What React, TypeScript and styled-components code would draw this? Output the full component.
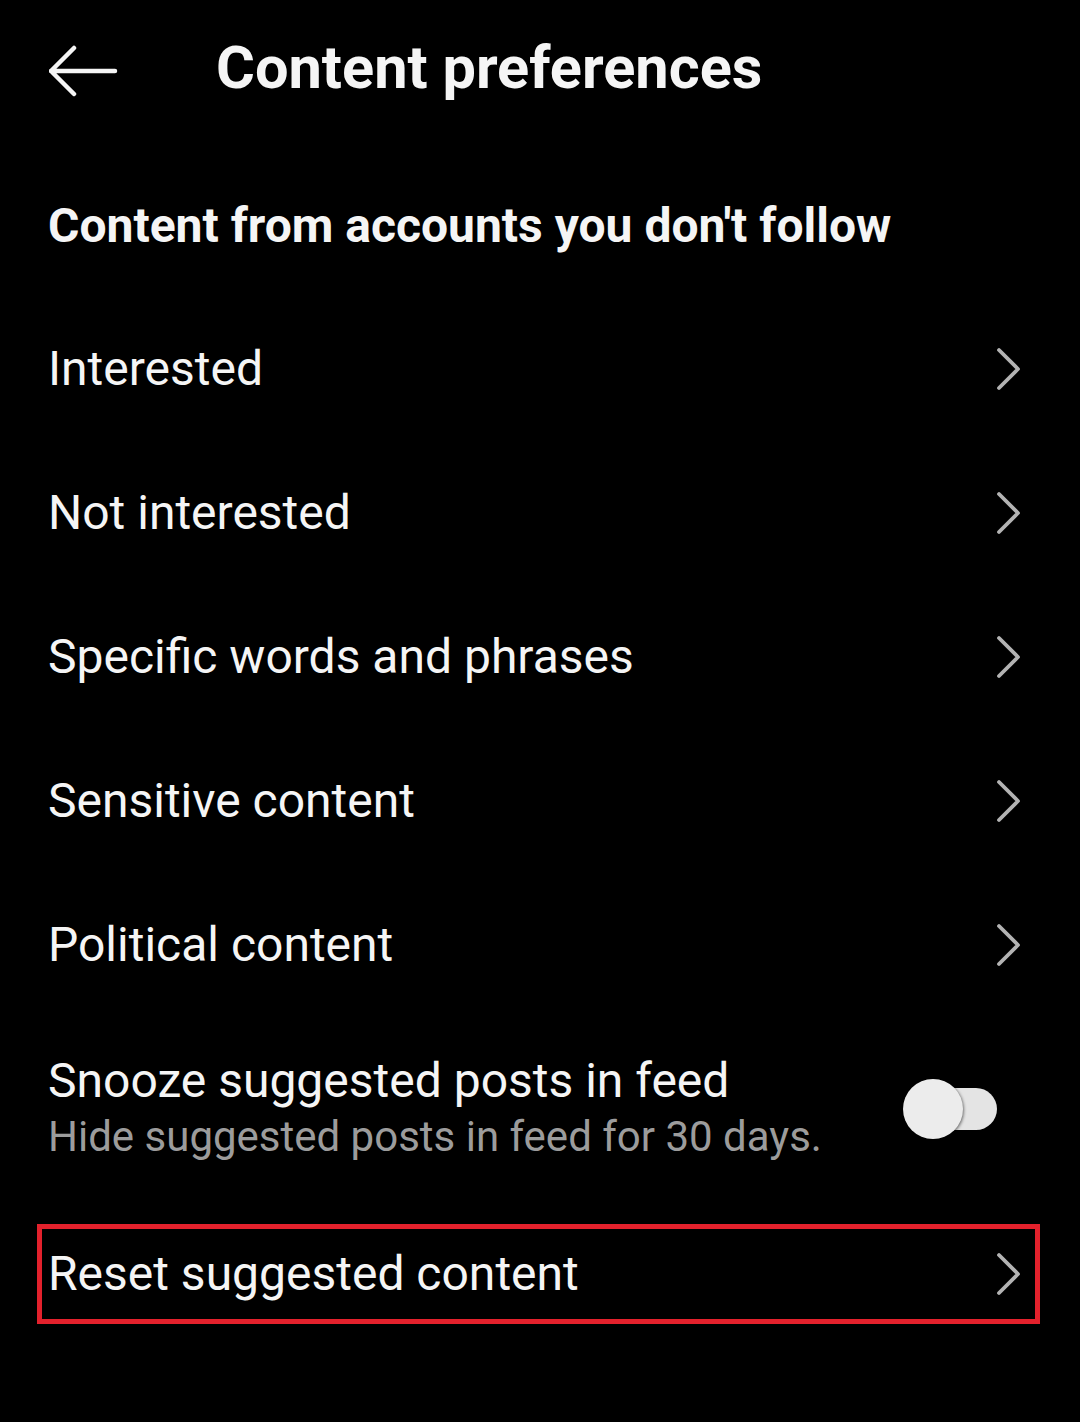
import * as React from 'react'
import styled, { createGlobalStyle } from 'styled-components'

const GlobalStyle = createGlobalStyle`
  html, body {
    margin: 0;
    padding: 0;
    background: #000;
  }
  body {
    font-family: Roboto, 'Noto Sans', 'Liberation Sans', sans-serif;
    color: #f5f5f5;
  }
`

const Page = styled.div`
  width: 1080px;
  min-height: 1422px;
  background: #000;
  display: flex;
  flex-direction: column;
`

const Header = styled.header`
  height: 142px;
  display: flex;
  align-items: center;
  padding-left: 49px;
  box-sizing: border-box;
`

const BackButton = styled.div`
  width: 167px;
  display: flex;
  align-items: center;
  svg {
    display: block;
  }
`

const Title = styled.h1`
  margin: 0 0 6px;
  font-size: 59.5px;
  font-weight: 700;
  color: #f5f5f5;
  line-height: 70px;
`

const SectionTitle = styled.h2`
  margin: 0;
  height: 155px;
  padding: 56px 0 0 48px;
  box-sizing: border-box;
  font-size: 48px;
  font-weight: 700;
  line-height: 56px;
  color: #f5f5f5;
`

const Row = styled.div<{ $height?: number }>`
  height: ${p => p.$height ?? 144}px;
  display: flex;
  align-items: center;
  justify-content: space-between;
  padding: 0 58px 0 48px;
  box-sizing: border-box;
`

const Label = styled.div`
  font-size: 48px;
  font-weight: 400;
  color: #f5f5f5;
  line-height: 56px;
`

const Sub = styled.div`
  font-size: 42px;
  color: #9c9c9c;
  line-height: 52px;
`

const TextBlock = styled.div`
  display: flex;
  flex-direction: column;
  gap: 2px;
  margin-top: -2px;
`

const Highlight = styled.div`
  margin: 24px 40px 0 37px;
  height: 100px;
  border: 5px solid #e3212c;
  box-sizing: border-box;
  display: flex;
  align-items: center;
  justify-content: space-between;
  padding: 0 13px 0 6px;
`

const Toggle = styled.div`
  position: relative;
  width: 94px;
  height: 60px;
  margin-right: 25px;
`

const Track = styled.div`
  position: absolute;
  right: 0;
  top: 9px;
  width: 67px;
  height: 42px;
  border-radius: 21px;
  background: #e4e4e4;
`

const Thumb = styled.div`
  position: absolute;
  left: 0;
  top: 0;
  width: 60px;
  height: 60px;
  border-radius: 50%;
  background: #ececec;
  box-shadow: 1px 1px 3px rgba(0, 0, 0, 0.5);
`

const Chevron = () => (
  <svg width="26" height="44" viewBox="0 0 26 44">
    <path
      d="M3 3 L22 22 L3 41"
      fill="none"
      stroke="#b3b3b3"
      strokeWidth="3.8"
      strokeLinecap="round"
      strokeLinejoin="round"
    />
  </svg>
)

const BackArrow = () => (
  <svg width="72" height="52" viewBox="0 0 72 52">
    <path
      d="M2 26 H66 M25 3 L2 26 L25 49"
      fill="none"
      stroke="#f5f5f5"
      strokeWidth="4.5"
      strokeLinecap="round"
      strokeLinejoin="round"
    />
  </svg>
)

const items = [
  'Interested',
  'Not interested',
  'Specific words and phrases',
  'Sensitive content',
  'Political content',
]

export default function App() {
  return (
    <Page>
      <GlobalStyle />
      <Header>
        <BackButton>
          <BackArrow />
        </BackButton>
        <Title>Content preferences</Title>
      </Header>
      <SectionTitle>Content from accounts you don't follow</SectionTitle>
      {items.map(label => (
        <Row key={label}>
          <Label>{label}</Label>
          <Chevron />
        </Row>
      ))}
      <Row $height={183}>
        <TextBlock>
          <Label>Snooze suggested posts in feed</Label>
          <Sub>Hide suggested posts in feed for 30 days.</Sub>
        </TextBlock>
        <Toggle>
          <Track />
          <Thumb />
        </Toggle>
      </Row>
      <Highlight>
        <Label>Reset suggested content</Label>
        <Chevron />
      </Highlight>
    </Page>
  )
}
